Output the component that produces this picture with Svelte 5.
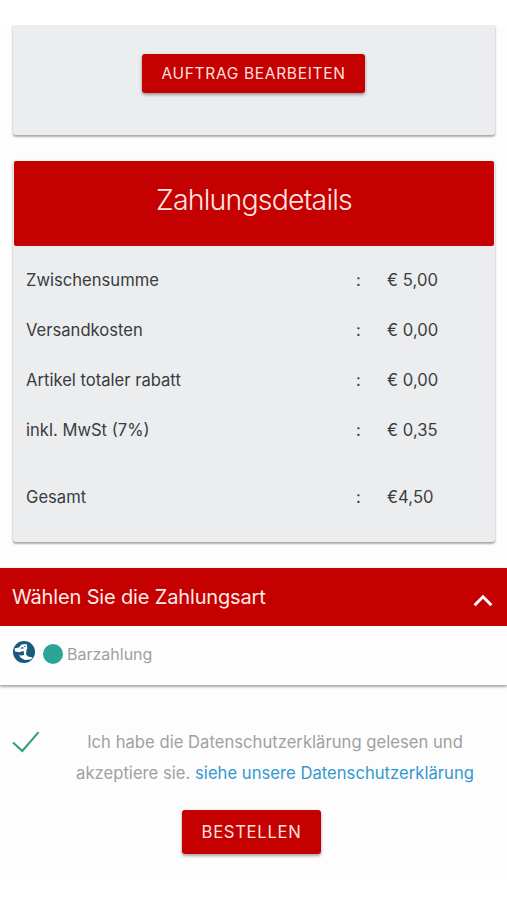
<script lang="ts">
	type Row = { label: string; value: string; total?: boolean };

	const rows: Row[] = [
		{ label: 'Zwischensumme', value: '€ 5,00' },
		{ label: 'Versandkosten', value: '€ 0,00' },
		{ label: 'Artikel totaler rabatt', value: '€ 0,00' },
		{ label: 'inkl. MwSt (7%)', value: '€ 0,35' },
		{ label: 'Gesamt', value: '€4,50', total: true }
	];

	let open = $state(true);
	let accepted = $state(true);
</script>

<main class="checkout">
	<section class="card order">
		<button class="btn edit">Auftrag bearbeiten</button>
	</section>

	<section class="card details">
		<h2>Zahlungsdetails</h2>
		<div class="rows">
			{#each rows as row}
				<div class="row" class:total={row.total}>
					<span class="label">{row.label}</span>
					<span class="colon">:</span>
					<span class="value">{row.value}</span>
				</div>
			{/each}
		</div>
	</section>

	<section class="payment">
		<button class="payment-head" aria-expanded={open} onclick={() => (open = !open)}>
			<span>Wählen Sie die Zahlungsart</span>
			<svg class="chevron" class:closed={!open} viewBox="0 0 20 13" aria-hidden="true">
				<path d="M1.6 11.2 10 2.8l8.4 8.4" />
			</svg>
		</button>
		{#if open}
			<div class="method">
				<svg class="cash" viewBox="0 0 24 24" aria-hidden="true">
					<circle cx="12" cy="12" r="11" fill="#175a80" />
					<path d="M2.6 8.2 7 7.4l2.4-3 5.2-.4.8 4.4-1.8 2.4-4.2.6-1.8.9-4.6-.7z" fill="#fff" />
					<path d="m11.6 10.6 3-.6-.6 4.2 1.8 2.4 5 .8-2 2.2-6 .4-4-2.2-1.8-2.6 2.4.4 2.8-.6z" fill="#fff" />
					<path d="m8.8 8.4 1.8-.8 1 .8M12.4 6.4h1.2" class="crease" />
				</svg>
				<span class="radio"></span>
				<span class="method-name">Barzahlung</span>
			</div>
		{/if}
	</section>

	<div class="consent">
		<button class="check" aria-label="Datenschutzerklärung akzeptieren" onclick={() => (accepted = !accepted)}>
			{#if accepted}
				<svg viewBox="0 0 28 22" aria-hidden="true">
					<path d="M1 11.5 10.3 20 26.6 1.2" />
				</svg>
			{/if}
		</button>
		<p>
			Ich habe die Datenschutzerklärung gelesen und<br />
			akzeptiere sie. <a href="#datenschutz">siehe unsere Datenschutzerklärung</a>
		</p>
	</div>

	<button class="btn submit">Bestellen</button>
</main>

<style>
	:global(body) {
		margin: 0;
		background: #fff;
	}
	.checkout {
		box-sizing: border-box;
		width: 507px;
		height: 900px;
		padding-top: 25px;
		overflow: hidden;
		display: flex;
		flex-direction: column;
		background: linear-gradient(#fff 25px, #fdfdfd 25px, #fdfdfd 880px, #fff 880px);
		font-family: Inter, 'Liberation Sans', sans-serif;
		font-size: 16px;
		color: #3a3c3e;
	}
	button {
		padding: 0;
		border: 0;
		font: inherit;
		cursor: pointer;
	}
	.card {
		margin: 0 12px 0 13px;
		background: #ebedef;
		border-radius: 0 0 3px 3px;
		box-shadow:
			0 2px 2px rgba(0, 0, 0, 0.25),
			0 1px 3px rgba(0, 0, 0, 0.16);
	}
	.order {
		display: flex;
		justify-content: center;
		align-items: flex-start;
		height: 110px;
		clip-path: inset(0 -6px -8px -6px);
	}
	.btn {
		background: #c40000;
		color: #ffe0dc;
		border-radius: 3px;
		text-transform: uppercase;
		box-shadow:
			0 2px 3px rgba(0, 0, 0, 0.28),
			0 1px 4px rgba(0, 0, 0, 0.12);
	}
	.edit {
		width: 223px;
		height: 39px;
		margin: 29px 1px 0 0;
		padding-bottom: 1px;
		font-size: 15.5px;
		letter-spacing: 0.68px;
	}
	.details {
		height: 381px;
		margin-top: 26px;
	}
	h2 {
		margin: 0 1px;
		height: 85px;
		line-height: 77px;
		border-radius: 2px;
		background: #c40000;
		color: #ffe4e0;
		text-align: center;
		font-size: 28.5px;
		font-weight: 300;
		letter-spacing: -0.82px;
	}
	.rows {
		padding: 9px 0 0 13px;
	}
	.row {
		display: grid;
		grid-template-columns: 330px 31px 1fr;
		align-items: center;
		height: 50px;
		font-size: 16.6px;
	}
	.value {
		letter-spacing: 0.05px;
	}
	.total {
		margin-top: 17px;
	}
	.payment {
		margin-top: 26px;
		height: 117px;
		box-shadow:
			0 2px 2px rgba(0, 0, 0, 0.25),
			0 1px 3px rgba(0, 0, 0, 0.16);
	}
	.payment-head {
		display: flex;
		justify-content: space-between;
		width: 100%;
		height: 58px;
		padding: 0 14px 0 12px;
		background: #c40000;
		color: #ffeae6;
		font-size: 20px;
		letter-spacing: -0.15px;
		line-height: 58px;
	}
	.chevron {
		width: 20px;
		height: 13px;
		margin-top: 26px;
		fill: none;
		stroke: #fff;
		stroke-width: 3;
	}
	.closed {
		transform: rotate(180deg);
	}
	.method {
		display: flex;
		align-items: center;
		height: 58px;
		padding: 0 0 3px 12px;
		box-sizing: border-box;
		color: #a0a0a0;
	}
	.cash {
		width: 24px;
		height: 24px;
		margin-top: -3px;
	}
	.crease {
		fill: none;
		stroke: #175a80;
		stroke-width: 1.1;
	}
	.radio {
		width: 20px;
		height: 20px;
		margin: 0 4px 0 7px;
		border-radius: 50%;
		background: #2ba596;
	}
	.consent {
		display: flex;
		margin-top: 42px;
		padding-left: 12px;
		color: #a0a0a0;
	}
	.check {
		width: 28px;
		height: 22px;
		margin-top: 4px;
		background: none;
	}
	.check svg {
		display: block;
		width: 28px;
		height: 22px;
		fill: none;
		stroke: #329c78;
		stroke-width: 2;
	}
	p {
		flex: 1;
		margin: 0;
		padding-left: 3px;
		text-align: center;
		font-size: 16.6px;
		letter-spacing: 0.03px;
		line-height: 30.5px;
		white-space: nowrap;
	}
	a {
		color: #3498cf;
		text-decoration: none;
	}
	.submit {
		align-self: center;
		width: 139px;
		height: 44px;
		margin: 22px 4px 0 0;
		font-size: 16.7px;
		letter-spacing: 0.65px;
	}
</style>
